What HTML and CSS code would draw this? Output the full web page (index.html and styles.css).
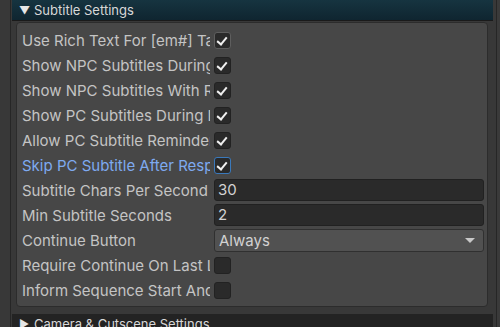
FILE: index.html
```html
<!DOCTYPE html>
<html lang="en">
<head>
    <meta charset="UTF-8">
    <title>Subtitle Settings</title>
    <link rel="stylesheet" href="styles.css">
</head>
<body>
    <div class="inspector">
        <div class="foldouts">
            <!-- Subtitle Settings -->
            <div class="foldout-header open">
                <span class="arrow">&#9660;</span>
                <span class="foldout-title">Subtitle Settings</span>
            </div>
            <div class="foldout-body">
                <div class="row">
                    <div class="label">Use Rich Text For [em#] Tags</div>
                    <div class="toggle hover checked"></div>
                </div>
                <div class="row">
                    <div class="label">Show NPC Subtitles During Line</div>
                    <div class="toggle checked"></div>
                </div>
                <div class="row">
                    <div class="label">Show NPC Subtitles With Responses</div>
                    <div class="toggle checked"></div>
                </div>
                <div class="row">
                    <div class="label">Show PC Subtitles During Line</div>
                    <div class="toggle checked"></div>
                </div>
                <div class="row">
                    <div class="label">Allow PC Subtitle Reminders</div>
                    <div class="toggle checked"></div>
                </div>
                <div class="row">
                    <div class="label focused">Skip PC Subtitle After Response Menu</div>
                    <div class="toggle focus checked"></div>
                </div>
                <div class="row">
                    <div class="label">Subtitle Chars Per Second</div>
                    <div class="text-field">30</div>
                </div>
                <div class="row">
                    <div class="label">Min Subtitle Seconds</div>
                    <div class="text-field">2</div>
                </div>
                <div class="row">
                    <div class="label">Continue Button</div>
                    <div class="dropdown">
                        <span>Always</span>
                        <span class="caret"></span>
                    </div>
                </div>
                <div class="row">
                    <div class="label">Require Continue On Last Line</div>
                    <div class="toggle"></div>
                </div>
                <div class="row">
                    <div class="label">Inform Sequence Start And End</div>
                    <div class="toggle"></div>
                </div>
            </div>

            <!-- Camera & Cutscene Settings -->
            <div class="foldout-header">
                <span class="arrow">&#9654;</span>
                <span class="foldout-title">Camera &amp; Cutscene Settings</span>
            </div>
        </div>
        <div class="scrollbar"></div>
    </div>
</body>
</html>
```

FILE: styles.css
```css
/* base */
html, body {
    margin: 0;
    padding: 0;
    width: 100%;
    height: 100%;
    background: #383838;
    font-family: Inter, "Noto Sans", sans-serif;
    font-size: 15px;
    color: #c4c4c4;
    overflow: hidden;
}

.inspector {
    display: flex;
    height: 100%;
    padding-left: 10px;
    box-sizing: border-box;
}

.foldouts {
    flex: 1;
    border-left: 1px solid #262626;
    padding-left: 1px;
}

.scrollbar {
    width: 3px;
    margin-left: 3px;
    border-left: 1px solid #262626;
    background: #3a3a3a;
}

/* foldout header */
.foldout-header {
    display: flex;
    align-items: center;
    height: 20px;
    border-bottom: 1px solid #1a1a1a;
    background: #232323;
    color: #d8d8d8;
    font-size: 13px;
}

.foldout-header.open {
    background: linear-gradient(#163440, #0f2530);
}

.arrow {
    width: 12px;
    margin-left: 7px;
    margin-right: 3px;
    font-size: 11px;
    color: #e6e6e6;
}

.foldout-title {
    white-space: nowrap;
}

/* foldout body */
.foldout-body {
    margin: 1px 5px 7px 4px;
    padding: 6px 3px 5px 5px;
    background: #474747;
    border: 1px solid #2c2c2c;
    border-radius: 4px;
    display: flex;
    flex-direction: column;
    gap: 3px;
}

.row {
    display: flex;
    align-items: center;
    height: 22px;
    gap: 4px;
}

.label {
    width: 188px;
    flex: none;
    white-space: nowrap;
    overflow: hidden;
}

.label.focused {
    color: #7eaaf0;
}

/* toggles */
.toggle {
    width: 15px;
    height: 15px;
    background: #2a2a2a;
    border: 1px solid #222;
    border-radius: 3px;
    position: relative;
}

.toggle.hover {
    border-color: #5e5e5e;
}

.toggle.focus {
    border-color: #3a79bb;
}

.toggle.checked::after {
    content: "";
    position: absolute;
    left: 4px;
    top: 2px;
    width: 4px;
    height: 8px;
    border: solid #f0f0f0;
    border-width: 0 2px 2px 0;
    transform: rotate(40deg);
}

/* fields */
.text-field {
    flex: 1;
    height: 20px;
    line-height: 20px;
    padding-left: 3px;
    background: #2a2a2a;
    border: 1px solid #212121;
    border-radius: 3px;
    color: #d2d2d2;
}

.dropdown {
    flex: 1;
    height: 21px;
    display: flex;
    align-items: center;
    justify-content: space-between;
    padding: 0 8px 0 4px;
    background: #515151;
    border: 1px solid #303030;
    border-radius: 3px;
    color: #d2d2d2;
}

.caret {
    width: 0;
    height: 0;
    border-left: 5px solid transparent;
    border-right: 5px solid transparent;
    border-top: 5px solid #c8c8c8;
}
```
